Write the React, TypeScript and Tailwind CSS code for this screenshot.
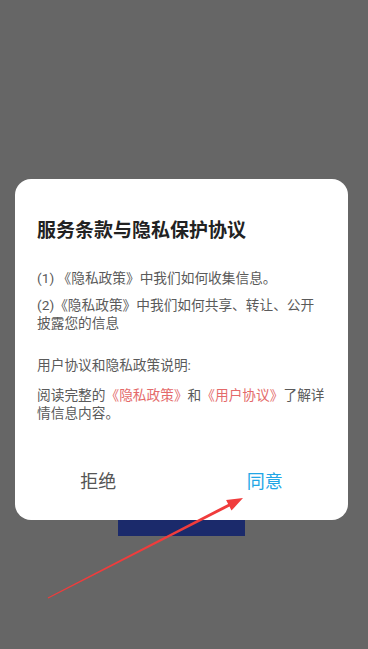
import React from 'react';

// ---------------------------------------------------------------- arrow --

function Arrow() {
  return (
    <svg
      className="absolute inset-0 pointer-events-none"
      width="368"
      height="649"
      viewBox="0 0 368 649"
    >
      <polygon
        fill="#f03c3c"
        points="47.8,597.6 228.1,503.9 226.1,500 243,498 231.5,510.6 229.5,506.6 48.2,598.6"
      />
    </svg>
  );
}

// ---------------------------------------------------------------- component --

export default function App() {
  const font = { fontFamily: "Roboto, 'Noto Sans CJK SC', sans-serif" };

  return (
    <div className="relative w-[368px] h-[649px] overflow-hidden bg-[#666666]" style={font}>
      <div className="pt-[179px]">
        {/* Dialog */}
        <div className="ml-[15px] w-[333px] rounded-[16px] bg-white">
          <div className="pt-[39px] pl-[22px] pr-[22px]">
            <h1 className="text-[19px] leading-[26px] font-bold text-[#222222]">
              服务条款与隐私保护协议
            </h1>

            <div className="mt-[25px] text-[13.7px] leading-[18px] text-[#5a5a5a]">
              <p>(1) 《隐私政策》中我们如何收集信息。</p>
              <p className="mt-[9px]">(2)《隐私政策》中我们如何共享、转让、公开披露您的信息</p>

              <p className="mt-[24px]">用户协议和隐私政策说明:</p>
              <p className="mt-[12px]">
                <span>阅读完整的</span>
                <span className="text-[#e46a6a]">《隐私政策》</span>
                <span>和</span>
                <span className="text-[#e46a6a]">《用户协议》</span>
                <span>了解详情信息内容。</span>
              </p>
            </div>
          </div>

          {/* Buttons */}
          <div className="mt-[30px] pb-[10px] flex">
            <button className="flex-1 h-[58px] text-[18px] text-[#555555]">拒绝</button>
            <button className="flex-1 h-[58px] text-[18px] text-[#22a6e6]">同意</button>
          </div>
        </div>

        {/* Button peeking out below dialog */}
        <div className="ml-[118px] w-[127px] h-[16px] bg-[#1b2a6b]" />
      </div>

      <Arrow />
    </div>
  );
}
